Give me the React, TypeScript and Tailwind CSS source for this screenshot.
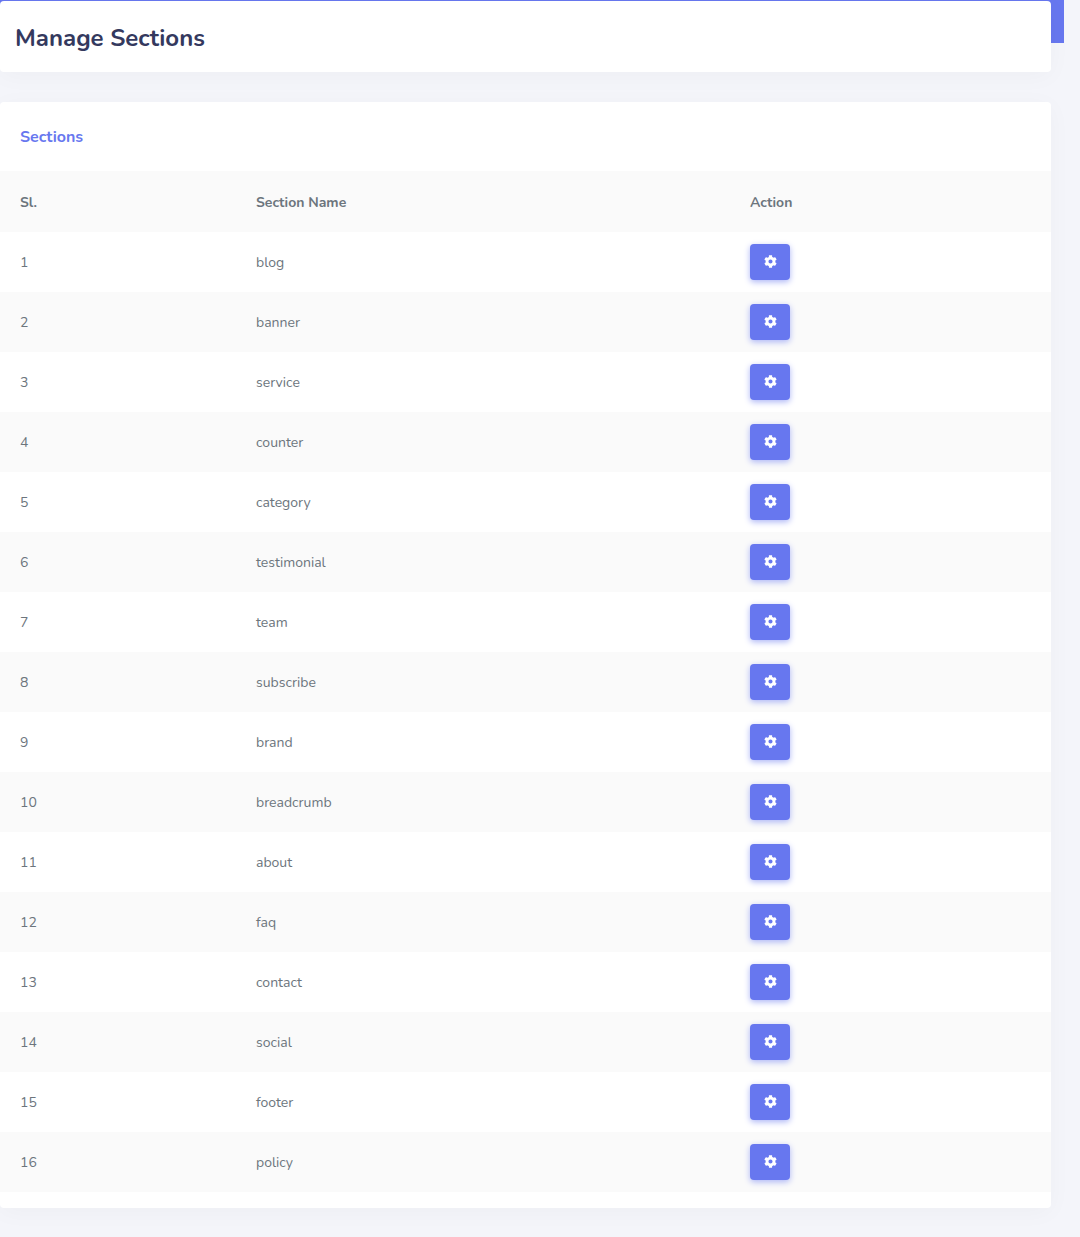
import { FaCog } from "react-icons/fa";

const rows = ["blog","banner","service","counter","category","testimonial","team","subscribe","brand","breadcrumb","about","faq","contact","social","footer","policy"];

const cols = "grid grid-cols-[236px_494px_1fr] items-center";

export default function App() {
  return (
    <div className="relative min-h-[1237px] bg-[#f4f5fa] font-['Nunito','Noto_Sans',sans-serif] text-[14px] text-[#6c757d]">
      <div className="absolute left-0 top-0 h-[43px] w-[1064px] bg-[#6777ef]" />
      <div className="relative w-[1051px] pt-px">
        <div className="flex h-[71px] items-center rounded-[4px] bg-white pl-[15px] pt-0.5 shadow-[0_4px_25px_rgba(0,0,0,0.03)]">
          <h1 className="text-[24px] font-bold leading-none text-[#34395e]">Manage Sections</h1>
        </div>
        <div className="mt-[30px] rounded-[4px] bg-white pb-4 shadow-[0_4px_25px_rgba(0,0,0,0.03)]">
          <div className="flex h-[69px] items-center pl-5">
            <h2 className="text-[16px] font-bold text-[#6777ef]">Sections</h2>
          </div>
          <div className={`${cols} h-[61px] bg-[#fafafa] pt-0.5 text-[14px] font-bold text-[#6c757d]`}>
            <div className="pl-5">Sl.</div>
            <div className="pl-5">Section Name</div>
            <div className="pl-5">Action</div>
          </div>
          {rows.map((name, i) => (
            <div key={name} className={`${cols} h-[60px] ${i % 2 === 1 ? "bg-[#fafafa]" : "bg-white"}`}>
              <div className="pl-5">{i + 1}</div>
              <div className="pl-5">{name}</div>
              <div className="pl-5">
                <button className="flex h-9 w-10 items-center justify-center rounded-[4px] bg-[#6777ef] pb-px text-white shadow-[0_2px_6px_#acb5f6]">
                  <FaCog className="size-[13px]" />
                </button>
              </div>
            </div>
          ))}
        </div>
      </div>
    </div>
  );
}
